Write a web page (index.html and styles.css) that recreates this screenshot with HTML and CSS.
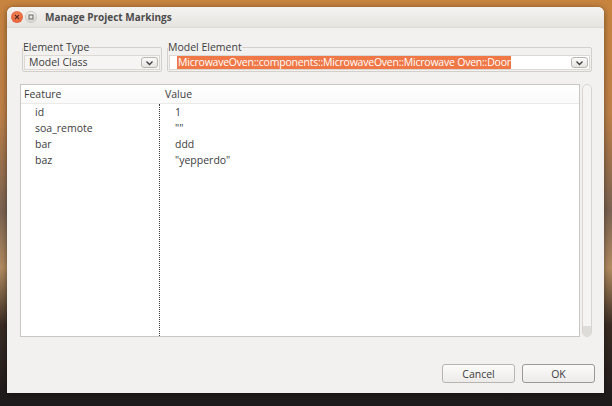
FILE: index.html
```html
<!DOCTYPE html>
<html>
<head>
<meta charset="utf-8">
<link rel="stylesheet" href="styles.css">
</head>
<body>
<div class="window">
  <div class="titlebar">
    <span class="btn-close"><svg width="8" height="8" viewBox="0 0 8 8"><path d="M2 2 L6 6 M6 2 L2 6" stroke="#5a2a1a" stroke-width="1.1"/></svg></span>
    <span class="btn-max"><svg width="8" height="8" viewBox="0 0 8 8"><rect x="2" y="2" width="4" height="4" fill="none" stroke="#6a6864" stroke-width="1"/></svg></span>
    <span class="title">Manage Project Markings</span>
  </div>
  <div class="content">
    <div class="groups">
      <fieldset class="group group-type">
        <legend>Element Type</legend>
        <div class="combo">
          <span class="combo-text">Model Class</span>
          <span class="drop"><svg width="9" height="6" viewBox="0 0 9 6"><path d="M1.5 1.5 L4.5 4.5 L7.5 1.5" fill="none" stroke="#3c3c3c" stroke-width="1.3"/></svg></span>
        </div>
      </fieldset>
      <fieldset class="group group-elem">
        <legend>Model Element</legend>
        <div class="combo combo-edit">
          <span class="combo-text"><span class="sel">MicrowaveOven::components::MicrowaveOven::Microwave Oven::Door</span></span>
          <span class="drop"><svg width="9" height="6" viewBox="0 0 9 6"><path d="M1.5 1.5 L4.5 4.5 L7.5 1.5" fill="none" stroke="#3c3c3c" stroke-width="1.3"/></svg></span>
        </div>
      </fieldset>
    </div>
    <div class="tablewrap">
      <div class="table">
        <div class="thead">
          <div class="c1">Feature</div>
          <div class="c2">Value</div>
        </div>
        <div class="tbody">
          <div class="col col1">
            <div class="cell">id</div>
            <div class="cell">soa_remote</div>
            <div class="cell">bar</div>
            <div class="cell">baz</div>
          </div>
          <div class="col col2">
            <div class="cell">1</div>
            <div class="cell">""</div>
            <div class="cell">ddd</div>
            <div class="cell">"yepperdo"</div>
          </div>
        </div>
      </div>
      <div class="scrollbar"><div class="thumb"></div></div>
    </div>
    <div class="buttons">
      <button class="btn">Cancel</button>
      <button class="btn btn-ok">OK</button>
    </div>
  </div>
</div>
</body>
</html>
```
FILE: styles.css
```css
html, body {
  margin: 0;
  padding: 0;
  width: 612px;
  height: 406px;
  overflow: hidden;
}
body {
  background:
    linear-gradient(180deg, #c7843f 0%, #bd8048 28%, #7a6252 52%, #b18b60 66%, #3a2c24 80%, #1d1a1b 100%);
  font-family: "Open Sans", "Noto Sans", sans-serif;
  font-size: 10.5px;
  color: #3c3c3c;
}
.window {
  margin: 7px 0 0 7px;
  width: 597px;
  height: 386px;
  background: #f2f1f0;
  border-radius: 6px 6px 0 0;
  box-shadow: 0 1px 6px rgba(0,0,0,0.45);
  display: flex;
  flex-direction: column;
  overflow: hidden;
}
.titlebar {
  height: 20px;
  flex: none;
  display: flex;
  align-items: center;
  padding-left: 4px;
  background: linear-gradient(180deg, #f4f3f1 0%, #e6e4e0 100%);
  border-bottom: 1px solid #dedbd7;
}
.btn-close {
  width: 12px;
  height: 12px;
  border-radius: 50%;
  background: radial-gradient(circle at 50% 40%, #f58a5e 0%, #e6603a 70%, #c8502f 100%);
  display: flex;
  align-items: center;
  justify-content: center;
}
.btn-max {
  width: 12px;
  height: 12px;
  border-radius: 50%;
  margin-left: 2px;
  background: linear-gradient(180deg, #f4f3f1, #dad7d3);
  border: 1px solid #c9c6c2;
  box-sizing: border-box;
  display: flex;
  align-items: center;
  justify-content: center;
}
.title {
  margin-left: 8px;
  font-weight: bold;
  font-size: 10px;
  color: #4c4c4c;
}
.content {
  flex: 1;
  display: flex;
  flex-direction: column;
  padding: 12px 12px 10px 13px;
}
.groups {
  display: flex;
  gap: 5px;
  margin-left: 2px;
}
.group {
  margin: 0;
  padding: 1px 1px 1px 1px;
  border: 1px solid #d3d0cc;
  border-radius: 2px;
  min-width: 0;
}
.group legend {
  padding: 0;
  margin-left: -1px;
  line-height: 14px;
  color: #3c3c3c;
}
.group-type { width: 140px; box-sizing: border-box; flex: none; }
.group-elem { flex: 1; }
.combo {
  height: 13px;
  display: flex;
  align-items: center;
  background: #f6f5f4;
  border: 1px solid #dcd9d5;
  padding-left: 4px;
  padding-right: 1px;
}
.combo-edit {
  background: #fff;
  padding-left: 7px;
}
.combo-text {
  flex: 1;
  white-space: nowrap;
  overflow: hidden;
  line-height: 13px;
}
.sel {
  background: #f07746;
  color: #fff;
  padding: 1px 0 1px 1px;
  letter-spacing: -0.22px;
}
.drop {
  width: 17px;
  height: 11px;
  border: 1px solid #b9b6b1;
  border-radius: 3px;
  background: linear-gradient(180deg, #fbfbfa, #e6e4e1);
  display: flex;
  align-items: center;
  justify-content: center;
  box-sizing: border-box;
}
.tablewrap {
  margin-top: 12px;
  height: 253px;
  display: flex;
}
.table {
  flex: 1;
  background: #fff;
  border: 1px solid #cac7c3;
  display: flex;
  flex-direction: column;
}
.thead {
  height: 18px;
  display: flex;
  align-items: center;
  border-bottom: 1px solid #eceae7;
  background: linear-gradient(180deg, #ffffff, #fafafa);
}
.thead .c1 { width: 140px; padding-left: 3px; }
.thead .c2 { padding-left: 1px; }
.tbody {
  flex: 1;
  display: flex;
}
.col1 {
  border-right: 1px dotted #3a3a3a;
  padding-left: 14px;
  width: 124px;
}
.col2 { padding-left: 15px; }
.cell {
  height: 16px;
  line-height: 16px;
  color: #3c3c3c;
}
.scrollbar {
  width: 10px;
  margin-left: 2px;
  background: #f5f4f3;
  border: 1px solid #d8d5d1;
  border-radius: 5px;
  box-sizing: border-box;
  display: flex;
  flex-direction: column;
  justify-content: flex-end;
}
.thumb {
  height: 10px;
  border-radius: 0 0 5px 5px;
  background: #dedcd9;
}
.buttons {
  margin-top: auto;
  display: flex;
  justify-content: flex-end;
  gap: 7px;
  margin-right: -3px;
}
.btn {
  width: 73px;
  height: 19px;
  border: 1px solid #b8b5b0;
  border-radius: 3px;
  background: linear-gradient(180deg, #fbfbfa, #ecebe9);
  font-family: inherit;
  font-size: 10.5px;
  color: #3c3c3c;
  padding: 0;
}
.btn-ok {
  border-color: #9c9995;
}
```
